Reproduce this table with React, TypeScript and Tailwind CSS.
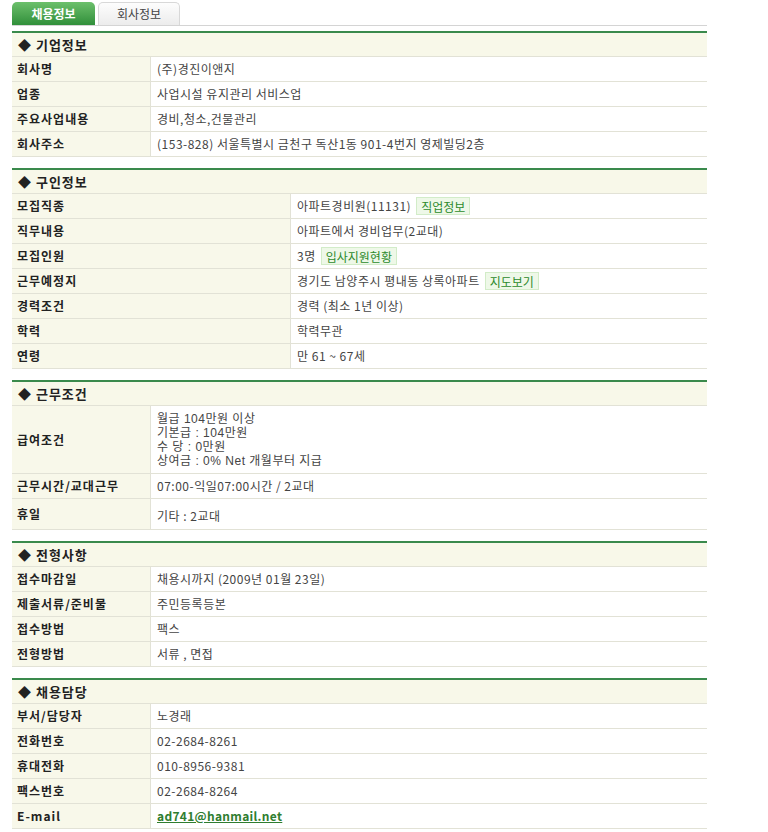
import React from 'react';

type Row = { label: string; value: React.ReactNode; h?: string };
type Section = { title: string; labelW: string; rows: Row[] };

function Badge({ children }: { children: React.ReactNode }) {
    return (
        <span className="ml-[5px] inline-block h-[18px] px-[4px] leading-[17px] tracking-normal bg-[#eef8e8] border border-[#d2ecc8] text-[#2c8a2c] text-[12px]">
            {children}
        </span>
    );
}

const sections: Section[] = [
    {
        title: '기업정보',
        labelW: 'w-[139px]',
        rows: [
            { label: '회사명', value: '(주)경진이앤지' },
            { label: '업종', value: '사업시설 유지관리 서비스업' },
            { label: '주요사업내용', value: '경비,청소,건물관리' },
            { label: '회사주소', value: '(153-828) 서울특별시 금천구 독산1동 901-4번지 영제빌딩2층' },
        ],
    },
    {
        title: '구인정보',
        labelW: 'w-[279px]',
        rows: [
            { label: '모집직종', value: <>아파트경비원(11131)<Badge>직업정보</Badge></> },
            { label: '직무내용', value: '아파트에서 경비업무(2교대)' },
            { label: '모집인원', value: <>3명<Badge>입사지원현황</Badge></> },
            { label: '근무예정지', value: <>경기도 남양주시 평내동 상록아파트<Badge>지도보기</Badge></> },
            { label: '경력조건', value: '경력 (최소 1년 이상)' },
            { label: '학력', value: '학력무관' },
            { label: '연령', value: '만 61 ~ 67세' },
        ],
    },
    {
        title: '근무조건',
        labelW: 'w-[139px]',
        rows: [
            {
                label: '급여조건',
                h: 'h-[68px]',
                value: (
                    // 줄간격 14px
                    <div className="leading-[14px] font-['Liberation_Sans','Noto_Sans_CJK_KR',sans-serif]">
                        <div>월급 104만원 이상</div>
                        <div>기본급 : 104만원</div>
                        <div>수 당 : 0만원</div>
                        <div>상여금 : 0% Net 개월부터 지급</div>
                    </div>
                ),
            },
            { label: '근무시간/교대근무', value: '07:00-익일07:00시간 / 2교대' },
            { label: '휴일', h: 'h-[31px]', value: <div className="pt-[4px]">기타 : 2교대</div> },
        ],
    },
    {
        title: '전형사항',
        labelW: 'w-[139px]',
        rows: [
            { label: '접수마감일', value: '채용시까지 (2009년 01월 23일)' },
            { label: '제출서류/준비물', value: '주민등록등본' },
            { label: '접수방법', value: '팩스' },
            { label: '전형방법', value: '서류 , 면접' },
        ],
    },
    {
        title: '채용담당',
        labelW: 'w-[139px]',
        rows: [
            { label: '부서/담당자', value: '노경래' },
            { label: '전화번호', value: '02-2684-8261' },
            { label: '휴대전화', value: '010-8956-9381' },
            { label: '팩스번호', value: '02-2684-8264' },
            {
                label: 'E-mail',
                value: <a className="font-bold text-[#2f7d2f] underline tracking-[0.3px]">ad741@hanmail.net</a>,
            },
        ],
    },
];

export default function App() {
    return (
        <div className="w-[768px] h-[832px] bg-white overflow-hidden font-['Noto_Sans_CJK_KR','Noto_Sans',sans-serif] text-[12px] text-[#444]">
            <div className="ml-[12px] w-[695px] pt-[2px]">
                {/* 탭 */}
                <div className="flex items-end h-[24px] border-b border-[#d4d4d4]">
                    <div className="w-[83px] h-[23px] rounded-t-[5px] bg-gradient-to-b from-[#6cc06c] to-[#2f8f3a] text-white font-bold flex items-center justify-center">
                        채용정보
                    </div>
                    <div className="ml-[3px] w-[82px] h-[23px] rounded-t-[5px] border border-b-0 border-[#d8d8d8] bg-gradient-to-b from-[#fdfdfd] to-[#ececec] text-[#444] flex items-center justify-center">
                        회사정보
                    </div>
                </div>

                {sections.map((s, i) => (
                    <div key={s.title} className={i === 0 ? 'mt-[5px]' : 'mt-[11px]'}>
                        <div className="h-[2px] bg-[#3a8a4c]" />
                        <div className="h-[24px] bg-[#f8f8e9] border-b border-[#e2e2d6] flex items-center pl-[6px] font-bold text-[13px] tracking-[1px] text-[#222]">
                            ◆ {s.title}
                        </div>
                        {s.rows.map(r => (
                            <div key={r.label} className={`flex border-b border-[#e2e2d6] ${r.h ?? 'h-[25px]'}`}>
                                <div className={`${s.labelW} shrink-0 bg-[#f8f8ea] border-r border-[#e2e2d6] pl-[5px] flex items-center font-bold tracking-[1px] text-[#222]`}>
                                    {r.label}
                                </div>
                                <div className="flex-1 pl-[6px] flex items-center tracking-[0.5px]">{r.value}</div>
                            </div>
                        ))}
                    </div>
                ))}
            </div>
        </div>
    );
}
